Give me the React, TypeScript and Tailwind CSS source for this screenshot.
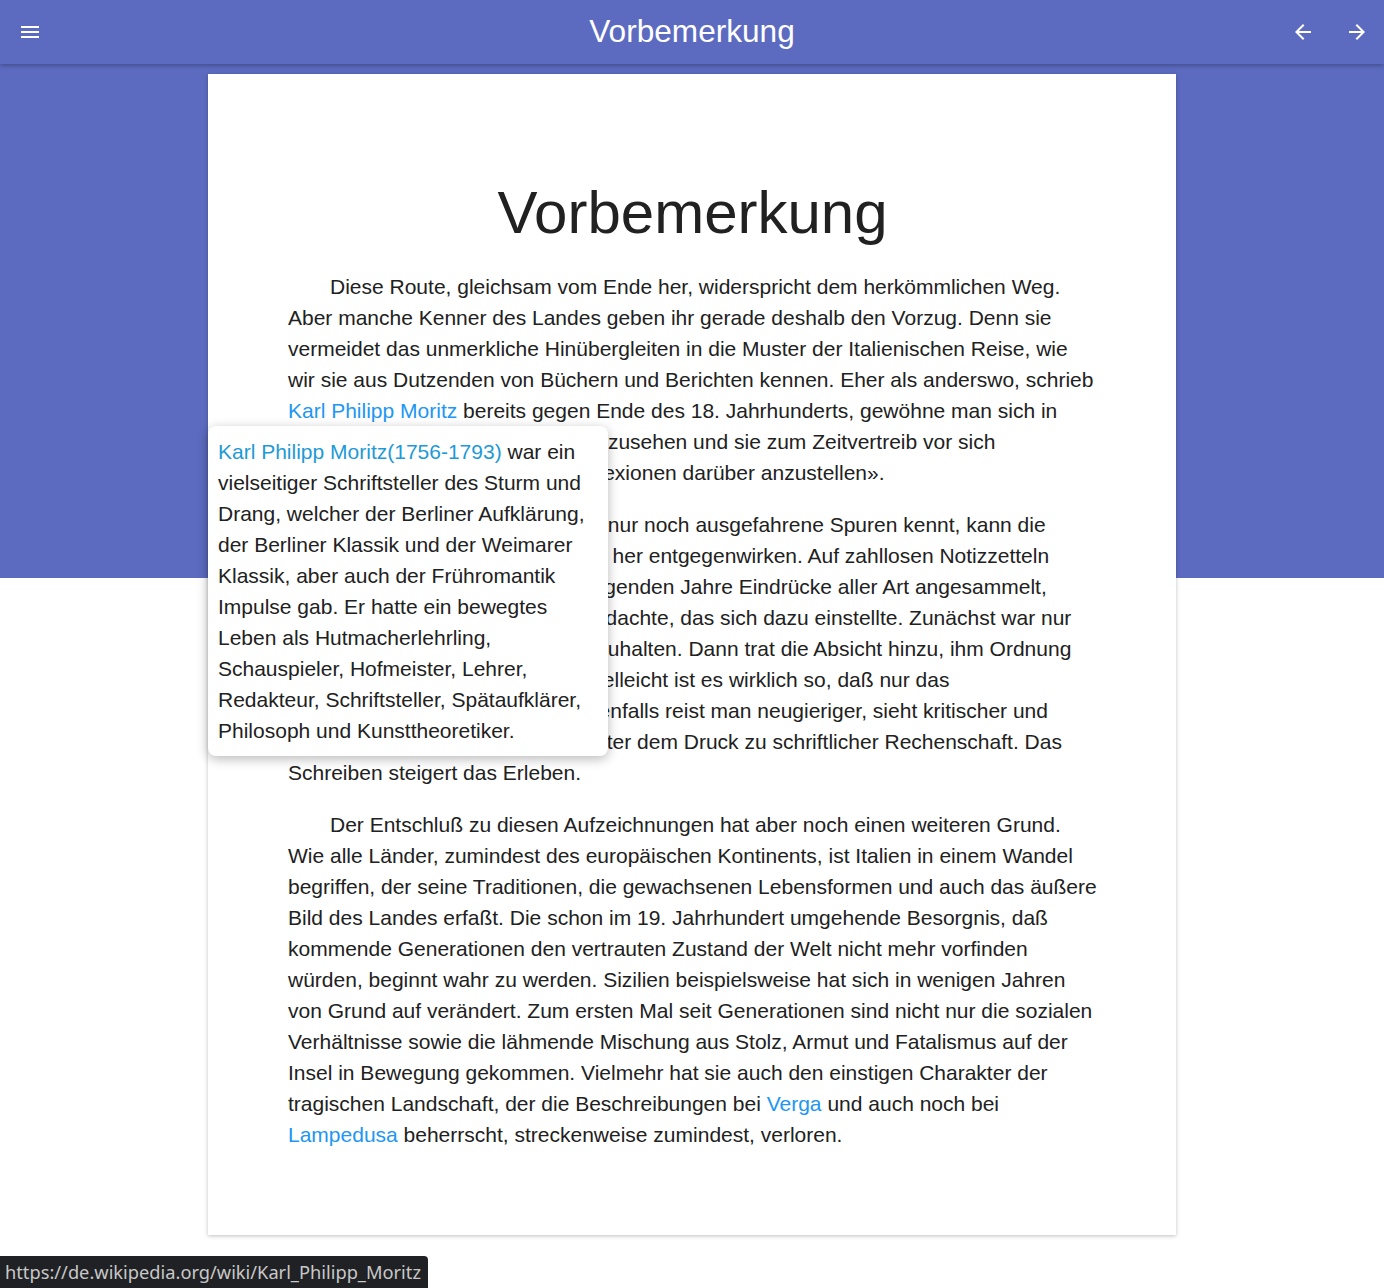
import React from "react";

const MenuIcon = () => (
  <svg width="24" height="24" viewBox="0 0 24 24" fill="white">
    <path d="M3 18h18v-2H3v2zm0-5h18v-2H3v2zm0-7v2h18V6H3z" />
  </svg>
);
const BackIcon = () => (
  <svg width="24" height="24" viewBox="0 0 24 24" fill="white">
    <path d="M20 11H7.83l5.59-5.59L12 4l-8 8 8 8 1.41-1.41L7.83 13H20v-2z" />
  </svg>
);
const FwdIcon = () => (
  <svg width="24" height="24" viewBox="0 0 24 24" fill="white">
    <path d="M12 4l-1.41 1.41L16.17 11H4v2h12.17l-5.58 5.59L12 20l8-8z" />
  </svg>
);

const link = "text-[#2196f3]";

export default function App() {
  return (
    <div
      className="relative min-h-[1288px] w-full bg-[linear-gradient(to_bottom,#5c6bc0_578px,#ffffff_578px)] text-[#212121]"
      style={{ fontFamily: '"Liberation Sans", Arial, sans-serif' }}
    >
      <header className="relative z-10 flex h-16 items-center justify-between bg-[#5c6bc0] shadow-[0_2px_4px_rgba(0,0,0,0.25)]">
        <div className="flex w-[120px] items-center pl-[18px]">
          <MenuIcon />
        </div>
        <h1 className="text-[31.6px] font-normal text-white">Vorbemerkung</h1>
        <div className="flex w-[120px] items-center justify-end gap-[30px] pr-[15px]">
          <BackIcon />
          <FwdIcon />
        </div>
      </header>

      <main className="flex justify-center pt-[10px]">
        <article className="relative w-[968px] bg-white pl-[80px] pr-[79px] pt-[109px] pb-[85px] shadow-[0_1px_4px_rgba(0,0,0,0.25)]">
          <h2 className="mb-[29px] text-center text-[60px] leading-[59px] font-normal text-[#212121]">
            Vorbemerkung
          </h2>
          <div className="text-[21px] leading-[31px]">
            <p className="mb-[21px] indent-[42px]">
              Diese Route, gleichsam vom Ende her, widerspricht dem herkömmlichen Weg. Aber manche Kenner des Landes geben ihr gerade deshalb den Vorzug. Denn sie vermeidet das unmerkliche Hinübergleiten in die Muster der Italienischen Reise, wie wir sie aus Dutzenden von Büchern und Berichten kennen. Eher als anderswo, schrieb{" "}
              <span className={link}>Karl Philipp Moritz</span> bereits gegen Ende des 18. Jahrhunderts, gewöhne man sich in Italien daran, «die Sachen bloß anzusehen und sie zum Zeitvertreib vor sich vorbeiziehen zu lassen, ohne Reflexionen darüber anzustellen».
            </p>
            <p className="mb-[21px] indent-[42px]">
              Selbst wer von Italien bislang nur noch ausgefahrene Spuren kennt, kann die Macht der Gewöhnung von Süden her entgegenwirken. Auf zahllosen Notizzetteln hatten sich in Verlaufe der nachfolgenden Jahre Eindrücke aller Art angesammelt, Beobachtungen, Gehörtes und Bedachte, das sich dazu einstellte. Zunächst war nur beabsichtigt, alles Gesehene festzuhalten. Dann trat die Absicht hinzu, ihm Ordnung und Zusammenhang zu geben. Vielleicht ist es wirklich so, daß nur das Aufgeschriebene überdauert. Jedenfalls reist man neugieriger, sieht kritischer und genauer hin, denn man steht ja unter dem Druck zu schriftlicher Rechenschaft. Das Schreiben steigert das Erleben.
            </p>
            <p className="indent-[42px]">
              Der Entschluß zu diesen Aufzeichnungen hat aber noch einen weiteren Grund. Wie alle Länder, zumindest des europäischen Kontinents, ist Italien in einem Wandel begriffen, der seine Traditionen, die gewachsenen Lebensformen und auch das äußere Bild des Landes erfaßt. Die schon im 19. Jahrhundert umgehende Besorgnis, daß kommende Generationen den vertrauten Zustand der Welt nicht mehr vorfinden würden, beginnt wahr zu werden. Sizilien beispielsweise hat sich in wenigen Jahren von Grund auf verändert. Zum ersten Mal seit Generationen sind nicht nur die sozialen Verhältnisse sowie die lähmende Mischung aus Stolz, Armut und Fatalismus auf der Insel in Bewegung gekommen. Vielmehr hat sie auch den einstigen Charakter der tragischen Landschaft, der die Beschreibungen bei{" "}
              <span className={link}>Verga</span> und auch noch bei{" "}
              <span className={link}>Lampedusa</span> beherrscht, streckenweise zumindest, verloren.
            </p>
          </div>

          <div className="absolute left-0 top-[352px] z-20 w-[400px] rounded-[8px] bg-white p-[10px] text-[21px] leading-[31px] shadow-[0_3px_12px_rgba(0,0,0,0.28)]">
            <span className="text-[#1e9ad6]">Karl Philipp Moritz(1756-1793)</span> war ein vielseitiger Schriftsteller des Sturm und Drang, welcher der Berliner Aufklärung, der Berliner Klassik und der Weimarer Klassik, aber auch der Frühromantik Impulse gab. Er hatte ein bewegtes Leben als Hutmacherlehrling, Schauspieler, Hofmeister, Lehrer, Redakteur, Schriftsteller, Spätaufklärer, Philosoph und Kunsttheoretiker.
          </div>
        </article>
      </main>

      <div
        className="fixed bottom-0 left-0 z-30 flex h-[32px] items-center rounded-tr-[4px] bg-[#202124] pl-[5px] pr-[7px] text-[18.25px] text-[#c8c8c8]"
        style={{ fontFamily: '"Noto Sans", sans-serif' }}
      >
        https://de.wikipedia.org/wiki/Karl_Philipp_Moritz
      </div>
    </div>
  );
}
